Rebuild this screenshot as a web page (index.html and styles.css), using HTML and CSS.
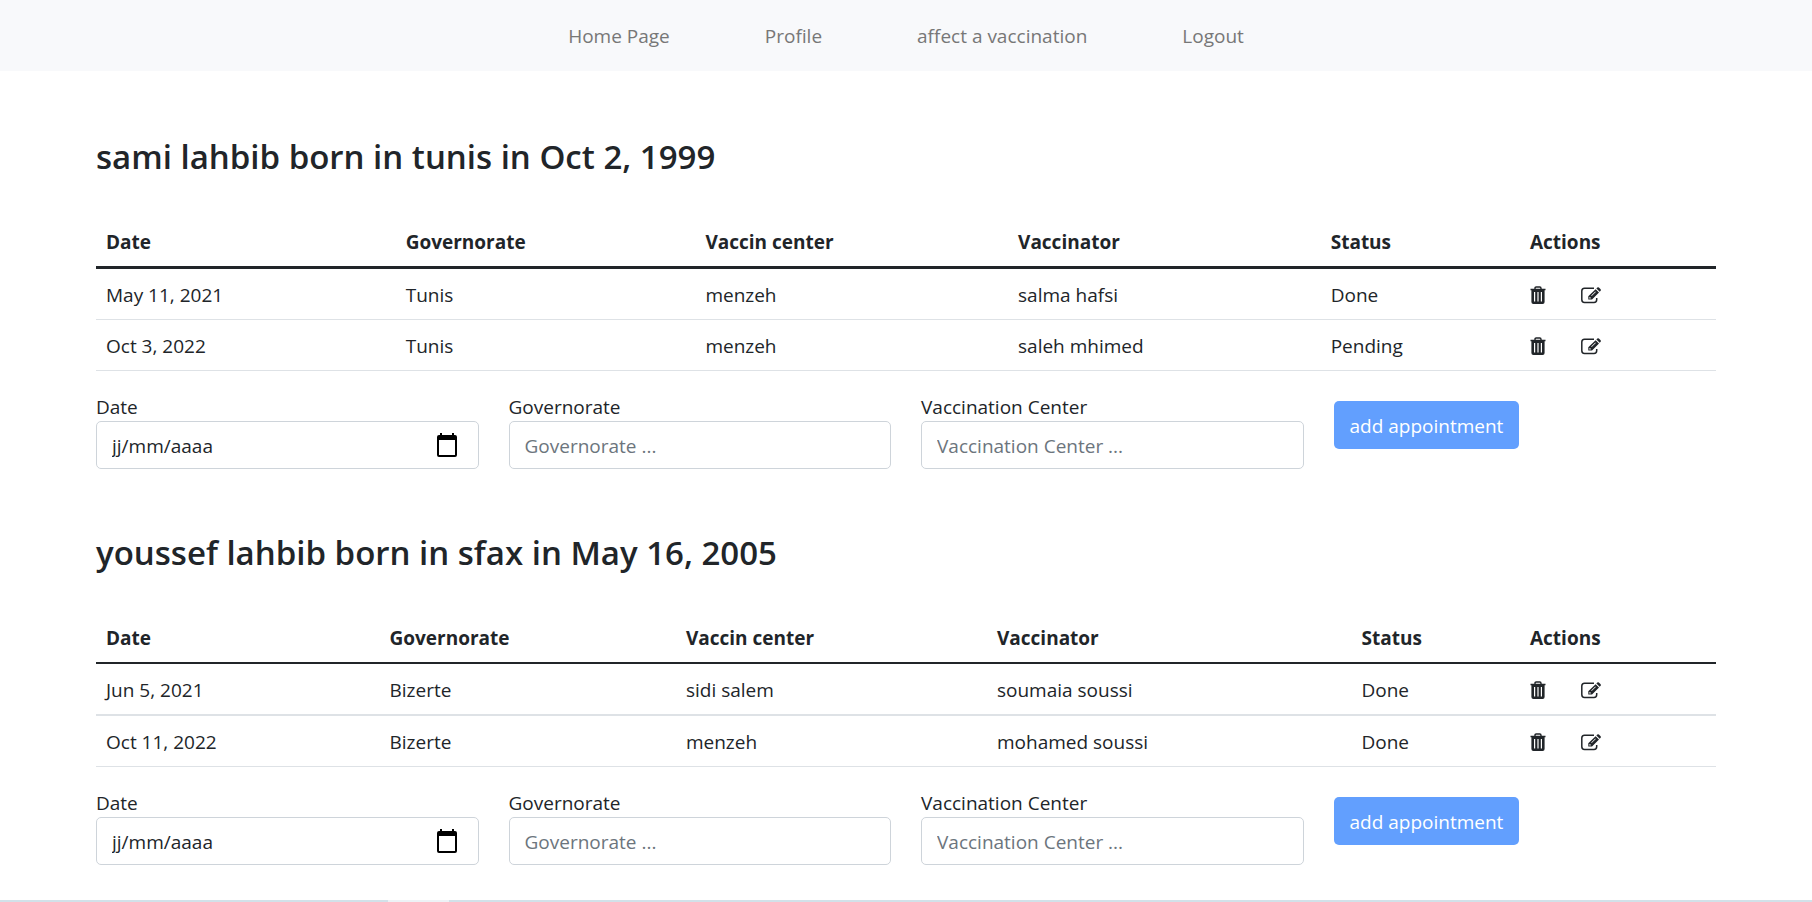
FILE: index.html
```html
<!DOCTYPE html>
<html lang="en">
<head>
<meta charset="utf-8">
<title>Appointments</title>
<link rel="stylesheet" href="styles.css">
</head>
<body>
<svg class="sprite" aria-hidden="true">
  <symbol id="trash" viewBox="0 0 16 18">
    <path fill="none" stroke="currentColor" stroke-width="1.4" d="M5 3V2.2Q5 1 6.2 1H9.8Q11 1 11 2.2V3"/>
    <path fill="currentColor" fill-rule="evenodd" d="M0.5 2.8H15.500V4.200H14.600V16Q14.600 18 12.600 18H3.400Q1.400 18 1.400 16V4.200H0.500ZM4 6V15.500H5.200V6ZM7.400 6V15.500H8.600V6ZM10.800 6V15.500H12V6Z"/>
  </symbol>
  <symbol id="edit" viewBox="0 0 20 17">
    <path fill="none" stroke="currentColor" stroke-width="1.500" d="M13 1.200H3.500Q.8 1.200.8 4V12.500Q.8 15.500 3.500 15.500H13Q15.700 15.500 15.700 12.500V11"/>
    <path fill="currentColor" fill-rule="evenodd" d="M14.600 2.200L18 5.600L11 12.600H7.300V9.200ZM14.300 4.400L10.200 8.500L10.700 9L14.800 4.900ZM8.900 9.900L8.300 10.500V11.500H9.400L10 11Z"/>
    <path fill="currentColor" d="M15.400 1.400L16.300.5Q17.100-.1 17.900.5L19.600 2.200Q20.200 3 19.600 3.800L18.700 4.700Z"/>
  </symbol>
  <symbol id="calendar" viewBox="0 0 20 24">
    <path fill="currentColor" fill-rule="evenodd" d="M3 0H5V2H15V0H17V2H18Q20 2 20 4V22Q20 24 18 24H2Q0 24 0 22V4Q0 2 2 2H3ZM2 7V22H18V7Z"/>
  </symbol>
</svg>
<nav class="navbar">
  <a class="nav-link" href="#">Home Page</a>
  <a class="nav-link" href="#">Profile</a>
  <a class="nav-link" href="#">affect a vaccination</a>
  <a class="nav-link" href="#">Logout</a>
</nav>
<main class="container">
  <section class="person">
    <h2 class="person-title">sami lahbib born in tunis in Oct 2, 1999</h2>
    <table class="table table-first">
      <thead>
        <tr><th>Date</th><th>Governorate</th><th>Vaccin center</th><th>Vaccinator</th><th>Status</th><th>Actions</th></tr>
      </thead>
      <tbody>
        <tr><td>May 11, 2021</td><td>Tunis</td><td>menzeh</td><td>salma hafsi</td><td>Done</td>
          <td><div class="actions"><button class="icon-btn" aria-label="Delete"><svg class="trash"><use href="#trash"/></svg></button><button class="icon-btn" aria-label="Edit"><svg class="edit"><use href="#edit"/></svg></button></div></td></tr>
        <tr><td>Oct 3, 2022</td><td>Tunis</td><td>menzeh</td><td>saleh mhimed</td><td>Pending</td>
          <td><div class="actions"><button class="icon-btn" aria-label="Delete"><svg class="trash"><use href="#trash"/></svg></button><button class="icon-btn" aria-label="Edit"><svg class="edit"><use href="#edit"/></svg></button></div></td></tr>
      </tbody>
    </table>
    <form class="form">
      <div class="field">
        <label for="date1">Date</label>
        <div class="control date-control"><input class="input date-input" id="date1" type="text" placeholder="jj/mm/aaaa"><button class="icon-btn" type="button" aria-label="Choose date"><svg class="calendar"><use href="#calendar"/></svg></button></div>
      </div>
      <div class="field">
        <label for="gov1">Governorate</label>
        <div class="control"><input class="input" id="gov1" type="text" placeholder="Governorate ..."></div>
      </div>
      <div class="field">
        <label for="center1">Vaccination Center</label>
        <div class="control"><input class="input" id="center1" type="text" placeholder="Vaccination Center ..."></div>
      </div>
      <button class="submit" type="submit">add appointment</button>
    </form>
  </section>
  <section class="person">
    <h2 class="person-title">youssef lahbib born in sfax in May 16, 2005</h2>
    <table class="table table-second">
      <thead>
        <tr><th>Date</th><th>Governorate</th><th>Vaccin center</th><th>Vaccinator</th><th>Status</th><th>Actions</th></tr>
      </thead>
      <tbody>
        <tr><td>Jun 5, 2021</td><td>Bizerte</td><td>sidi salem</td><td>soumaia soussi</td><td>Done</td>
          <td><div class="actions"><button class="icon-btn" aria-label="Delete"><svg class="trash"><use href="#trash"/></svg></button><button class="icon-btn" aria-label="Edit"><svg class="edit"><use href="#edit"/></svg></button></div></td></tr>
        <tr><td>Oct 11, 2022</td><td>Bizerte</td><td>menzeh</td><td>mohamed soussi</td><td>Done</td>
          <td><div class="actions"><button class="icon-btn" aria-label="Delete"><svg class="trash"><use href="#trash"/></svg></button><button class="icon-btn" aria-label="Edit"><svg class="edit"><use href="#edit"/></svg></button></div></td></tr>
      </tbody>
    </table>
    <form class="form">
      <div class="field">
        <label for="date2">Date</label>
        <div class="control date-control"><input class="input date-input" id="date2" type="text" placeholder="jj/mm/aaaa"><button class="icon-btn" type="button" aria-label="Choose date"><svg class="calendar"><use href="#calendar"/></svg></button></div>
      </div>
      <div class="field">
        <label for="gov2">Governorate</label>
        <div class="control"><input class="input" id="gov2" type="text" placeholder="Governorate ..."></div>
      </div>
      <div class="field">
        <label for="center2">Vaccination Center</label>
        <div class="control"><input class="input" id="center2" type="text" placeholder="Vaccination Center ..."></div>
      </div>
      <button class="submit" type="submit">add appointment</button>
    </form>
  </section>
</main>
<div class="bottom-strip"></div>
</body>
</html>
```

FILE: styles.css
```css
* { box-sizing: border-box; }
body {
  margin: 0;
  min-height: 100vh;
  display: flex;
  flex-direction: column;
  background: #fff;
  color: #212529;
  font: 19px/30px "Open Sans", "Noto Sans", sans-serif;
}
.sprite { display: none; }
.navbar {
  display: flex;
  justify-content: center;
  gap: 95px;
  padding: 21px 0 20px;
  background: #f8f9fb;
}
.nav-link { color: #777; text-decoration: none; }
.container {
  width: 100%;
  max-width: 1650px;
  margin: 0 auto;
  padding: 62px 15px 0;
  display: flex;
  flex-direction: column;
  gap: 60px;
}
.person-title {
  margin: 0 0 35px;
  font-size: 33px;
  line-height: 48px;
  font-weight: 600;
}
.table {
  width: 100%;
  table-layout: fixed;
  border-collapse: separate;
  border-spacing: 0;
  margin-bottom: 20px;
}
.table th, .table td { padding: 11px 10px 9px; text-align: left; }
.table td { border-bottom: 1px solid #dee2e6; }
.table th { font-weight: 700; border-bottom: 3px solid #212529; }
.table-first th:nth-child(1), .table-first th:nth-child(2) { width: 18.5%; }
.table-first th:nth-child(3), .table-first th:nth-child(4) { width: 19.3%; }
.table-first th:nth-child(5) { width: 12.3%; }
.table-second th { border-bottom-width: 2px; }
.table-second tbody tr:first-child td { border-bottom-width: 2px; }
.table-second th:nth-child(1) { width: 17.5%; }
.table-second th:nth-child(2) { width: 18.3%; }
.table-second th:nth-child(3) { width: 19.2%; }
.table-second th:nth-child(4) { width: 22.5%; }
.table-second th:nth-child(5) { width: 10.4%; }
.actions { display: flex; align-items: center; gap: 35px; height: 30px; }
.icon-btn {
  display: flex;
  padding: 0;
  border: 0;
  background: none;
  color: inherit;
  cursor: pointer;
}
.trash { width: 16px; height: 18px; }
.edit { width: 20px; height: 17px; }
.calendar { width: 20px; height: 24px; color: #000; }
.form {
  display: grid;
  grid-template-columns: repeat(4, 1fr);
  gap: 30px;
  align-items: start;
}
.field { display: flex; flex-direction: column; }
.field label { padding-top: 2px; line-height: 28px; }
.control {
  display: flex;
  align-items: center;
  height: 48px;
  padding: 0 15px;
  border: 1px solid #ced4da;
  border-radius: 5px;
}
.date-control { padding-right: 21px; }
.input {
  flex: 1;
  min-width: 0;
  padding: 2px 0 0;
  border: 0;
  outline: 0;
  background: none;
  color: #212529;
  font: inherit;
}
.input::placeholder { color: #6c757d; opacity: 1; }
.date-input::placeholder { color: #212529; }
.submit {
  justify-self: start;
  height: 48px;
  margin-top: 10px;
  padding: 2px 16px 0;
  border: 0;
  border-radius: 5px;
  background: #629ffe;
  color: #fff;
  font: inherit;
}
.bottom-strip {
  height: 2px;
  margin-top: auto;
  background: linear-gradient(90deg, #d2e1e9 388px, #edf2f6 388px, #edf2f6 449px, #d2e1e9 449px);
}
```
